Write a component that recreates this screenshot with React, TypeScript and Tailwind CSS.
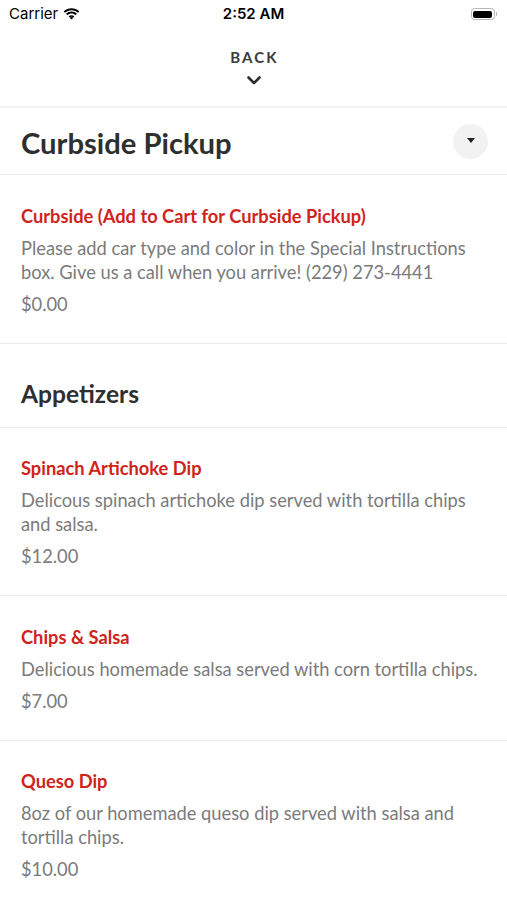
import React from 'react';

type Item = {
  name: string;
  description: string;
  price: string;
};

const curbside: Item[] = [
  {
    name: 'Curbside (Add to Cart for Curbside Pickup)',
    description:
      'Please add car type and color in the Special Instructions box. Give us a call when you arrive! (229) 273-4441',
    price: '$0.00'
  }
];

const appetizers: Item[] = [
  {
    name: 'Spinach Artichoke Dip',
    description: 'Delicous spinach artichoke dip served with tortilla chips and salsa.',
    price: '$12.00'
  },
  {
    name: 'Chips & Salsa',
    description: 'Delicious homemade salsa served with corn tortilla chips.',
    price: '$7.00'
  },
  {
    name: 'Queso Dip',
    description: '8oz of our homemade queso dip served with salsa and tortilla chips.',
    price: '$10.00'
  }
];

const StatusBar: React.FC = () => (
  <div className="flex items-center justify-between h-[28px] px-[9px] font-['Inter',sans-serif] text-[15px] text-black">
    <div className="flex items-center gap-[5px] w-[120px]">
      <span>Carrier</span>
      <svg width="17" height="12" viewBox="0 0 17 12">
        <path d="M8.5 2.2c2.5 0 4.8 1 6.5 2.6l1.3-1.4C14.2 1.4 11.5.2 8.5.2S2.8 1.4.7 3.4L2 4.8c1.7-1.6 4-2.6 6.5-2.6z" fill="#000" />
        <path d="M8.5 5.6c1.6 0 3 .6 4.1 1.6l1.3-1.4C12.5 4.4 10.6 3.6 8.5 3.6S4.5 4.4 3.1 5.8l1.3 1.4c1.1-1 2.5-1.6 4.1-1.6z" fill="#000" />
        <path d="M8.5 9c.7 0 1.3.3 1.8.7L8.5 11.6 6.7 9.7c.5-.4 1.1-.7 1.8-.7z" fill="#000" />
        <path d="M8.5 7.2c1.1 0 2.1.4 2.8 1.1l-1 1.1C9.8 9 9.2 8.7 8.5 8.7S7.2 9 6.7 9.4l-1-1.1c.7-.7 1.7-1.1 2.8-1.1z" fill="#000" />
      </svg>
    </div>
    <span className="font-semibold">2:52 AM</span>
    <div className="flex items-center justify-end w-[120px] pr-[1px]">
      <div className="w-[24px] h-[12px] rounded-[3.5px] border border-[#b5b5b5] p-[1.5px]">
        <div className="w-full h-full rounded-[2px] bg-black" />
      </div>
      <div className="w-[1.5px] h-[4px] rounded-r-sm bg-[#b5b5b5] ml-[1px]" />
    </div>
  </div>
);

const MenuItem: React.FC<{ item: Item; first?: boolean }> = ({ item, first }) => (
  <div className={`px-[21px] pb-[27px] border-b border-[#ececec] ${first ? 'pt-[29px]' : 'pt-[28.5px]'}`}>
    <div className="text-[18.3px] leading-[24px] font-bold text-[#d0231b]">{item.name}</div>
    <p className="mt-[8px] text-[18.3px] leading-[24px] text-[#7b7b7b]">{item.description}</p>
    <div className="mt-[8px] text-[18.3px] leading-[24px] text-[#7b7b7b]">{item.price}</div>
  </div>
);

const App: React.FC = () => {
  return (
    <div className="min-h-screen w-full bg-white font-['Lato',sans-serif] overflow-hidden">
      <StatusBar />

      <button className="w-full flex flex-col items-center pt-[19px] h-[80px] border-b-2 border-[#f2f2f2]">
        <span className="text-[15px] leading-[20px] font-bold tracking-[0.14em] text-[#3a3a3a] pl-[2px]">BACK</span>
        <svg width="14" height="9" viewBox="0 0 14 9" className="mt-[9px]">
          <path d="M1.5 1.5L7 7l5.5-5.5" stroke="#2e2e2e" strokeWidth="2.6" fill="none" strokeLinecap="round" strokeLinejoin="round" />
        </svg>
      </button>

      <div className="flex items-center justify-between pl-[21px] pr-[19px] h-[67px] border-b border-[#ececec]">
        <h1 className="text-[29.2px] leading-[34px] font-bold text-[#2f2f2f] pt-[3px]">Curbside Pickup</h1>
        <div className="w-[35px] h-[35px] rounded-full bg-[#f2f2f2] flex items-center justify-center">
          <svg width="8" height="6" viewBox="0 0 8 6">
            <path d="M0 0h8L4 5z" fill="#222" />
          </svg>
        </div>
      </div>

      {curbside.map(item => (
        <MenuItem key={item.name} item={item} first />
      ))}

      <div className="px-[21px] pt-[35px] pb-[17.5px] border-b border-[#ececec]">
        <h2 className="text-[24.6px] leading-[30px] font-bold text-[#2f2f2f]">Appetizers</h2>
      </div>

      {appetizers.map(item => (
        <MenuItem key={item.name} item={item} />
      ))}
    </div>
  );
};

export default App;
